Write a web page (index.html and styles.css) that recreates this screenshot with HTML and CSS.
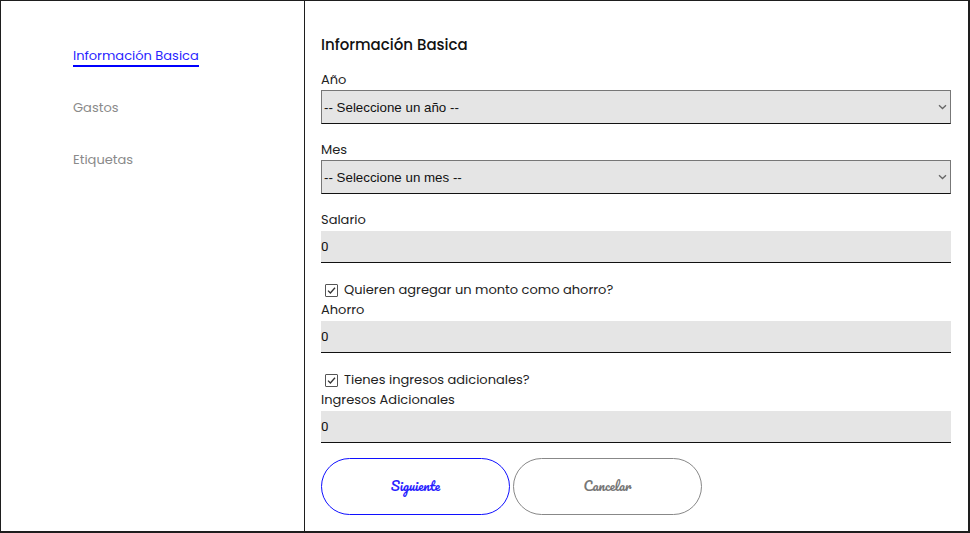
FILE: index.html
```html
<!DOCTYPE html>
<html lang="es">
<head>
<meta charset="utf-8">
<title>Información Basica</title>
<link rel="stylesheet" href="styles.css">
</head>
<body>
<div class="frame">
  <aside class="sidebar">
    <nav class="nav">
      <a class="nav-item active">Información Basica</a>
      <a class="nav-item">Gastos</a>
      <a class="nav-item">Etiquetas</a>
    </nav>
  </aside>
  <main class="main">
    <h2 class="title">Información Basica</h2>

    <div class="field sel">
      <label class="label">Año</label>
      <div class="select">
        <span class="select-text">-- Seleccione un año --</span>
        <svg class="chev" width="9" height="6" viewBox="0 0 9 6"><path d="M1 1.2 L4.5 4.5 L8 1.2" fill="none" stroke="#666" stroke-width="1.3"/></svg>
      </div>
    </div>

    <div class="field sel">
      <label class="label">Mes</label>
      <div class="select">
        <span class="select-text">-- Seleccione un mes --</span>
        <svg class="chev" width="9" height="6" viewBox="0 0 9 6"><path d="M1 1.2 L4.5 4.5 L8 1.2" fill="none" stroke="#666" stroke-width="1.3"/></svg>
      </div>
    </div>

    <div class="field">
      <label class="label">Salario</label>
      <div class="input">0</div>
    </div>

    <div class="check-row">
      <span class="box"><svg width="11" height="11" viewBox="0 0 11 11"><path d="M2 5.6 L4.4 8 L9 2.8" fill="none" stroke="#333" stroke-width="1.3"/></svg></span>
      <span>Quieren agregar un monto como ahorro?</span>
    </div>
    <div class="field">
      <label class="label">Ahorro</label>
      <div class="input">0</div>
    </div>

    <div class="check-row">
      <span class="box"><svg width="11" height="11" viewBox="0 0 11 11"><path d="M2 5.6 L4.4 8 L9 2.8" fill="none" stroke="#333" stroke-width="1.3"/></svg></span>
      <span>Tienes ingresos adicionales?</span>
    </div>
    <div class="field last">
      <label class="label">Ingresos Adicionales</label>
      <div class="input">0</div>
    </div>

    <div class="actions">
      <button class="btn primary">Siguiente</button>
      <button class="btn secondary">Cancelar</button>
    </div>
  </main>
</div>
</body>
</html>
```
FILE: styles.css
```css
html, body {
  margin: 0;
  padding: 0;
  background: #fff;
}
.frame {
  width: 970px;
  height: 533px;
  box-sizing: border-box;
  border: 1px solid #1e1e1e;
  border-bottom-width: 2px;
  border-right-width: 2px;
  display: flex;
  font-family: "Poppins", "Noto Sans", "Open Sans", sans-serif;
}
.sidebar {
  width: 303px;
  flex: none;
  border-right: 1px solid #1e1e1e;
}
.nav {
  display: flex;
  flex-direction: column;
  align-items: flex-start;
  padding: 45px 0 0 72px;
  gap: 31px;
}
.nav-item {
  font-size: 13px;
  line-height: 19px;
  color: #8a8a8a;
  border-bottom: 2px solid transparent;
}
.nav-item.active {
  color: #2a1fff;
  border-bottom-color: #0000ff;
}
.main {
  flex: 1;
  padding: 34px 17px 0 16px;
}
.title {
  margin: 0 0 16px;
  font-size: 15px;
  line-height: 20px;
  font-weight: 500;
  color: #111;
}
.field {
  display: flex;
  flex-direction: column;
  margin-bottom: 16px;
}
.field.sel {
  margin-bottom: 17px;
}
.field.last {
  margin-bottom: 15px;
}
.label {
  font-size: 13px;
  line-height: 18px;
  color: #222;
  margin-bottom: 2px;
}
.select {
  position: relative;
  height: 34px;
  margin-top: -1px;
  box-sizing: border-box;
  background: #e5e5e5;
  border: 1px solid #777;
  border-bottom-color: #111;
  display: flex;
  align-items: center;
  padding-left: 2px;
}
.select-text {
  font-family: "Liberation Sans", Arial, sans-serif;
  font-size: 13.33px;
  color: #111;
}
.chev {
  position: absolute;
  right: 3px;
  top: 13px;
}
.input {
  height: 32px;
  box-sizing: border-box;
  background: #e5e5e5;
  border-bottom: 1.5px solid #111;
  display: flex;
  align-items: center;
  font-family: "Roboto", "Liberation Sans", sans-serif;
  font-size: 13.33px;
  color: #111;
}
.check-row {
  display: flex;
  align-items: center;
  gap: 6px;
  height: 22px;
  margin-top: 1.5px;
  padding-left: 4px;
  font-size: 13px;
  color: #222;
}
.box {
  width: 13px;
  height: 13px;
  box-sizing: border-box;
  border: 1px solid #555;
  border-radius: 1px;
  display: flex;
  align-items: center;
  justify-content: center;
  background: #fff;
}
.box svg {
  display: block;
}
.actions {
  display: flex;
  gap: 3px;
}
.btn {
  width: 189px;
  height: 57px;
  border-radius: 29px;
  background: #fff;
  font-family: "Pacifico", "Liberation Serif", serif;
  font-weight: 400;
  font-size: 13px;
  line-height: 20px;
  padding: 0 0 2px;
  cursor: pointer;
}
.btn.primary {
  border: 1px solid #1010ff;
  color: #2a1fff;
}
.btn.secondary {
  border: 1px solid #888;
  color: #777;
}
```
